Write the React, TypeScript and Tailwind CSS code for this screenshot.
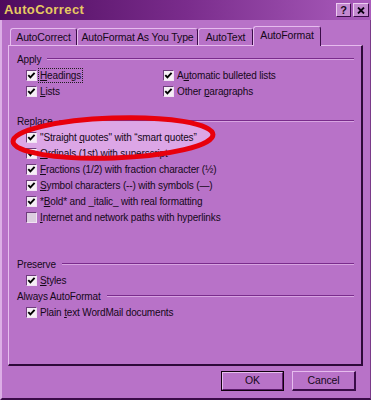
import React from "react";

const FONT = { fontFamily: '"Liberation Sans", Arial, sans-serif' };

function Box({ checked = true, grey = false }: { checked?: boolean; grey?: boolean }) {
  return (
    <span
      className={
        "inline-flex w-[11px] h-[11px] shrink-0 items-center justify-center border-t border-l border-r border-b border-t-[#6e3c7c] border-l-[#6e3c7c] border-r-[#f2e2f4] border-b-[#f2e2f4] " +
        (grey ? "bg-[#dccde0]" : "bg-[#f6eef6]")
      }
    >
      {checked && (
        <svg width="9" height="9" viewBox="0 0 9 9">
          <path d="M1.3 4.2 L3.4 6.4 L7.6 1.8" stroke="#000" strokeWidth="1.9" fill="none" />
        </svg>
      )}
    </span>
  );
}

function U({ children }: { children: React.ReactNode }) {
  return <span className="underline underline-offset-[1px]">{children}</span>;
}

function Row({
  children,
  checked = true,
  grey = false,
  focus = false,
}: {
  children: React.ReactNode;
  checked?: boolean;
  grey?: boolean;
  focus?: boolean;
}) {
  return (
    <div className="h-[16px] flex items-center gap-[2px]">
      <Box checked={checked} grey={grey} />
      <span
        className={
          "leading-[13px] whitespace-nowrap px-[1px] " +
          (focus ? "outline outline-1 outline-dotted outline-[#202020]" : "")
        }
      >
        {children}
      </span>
    </div>
  );
}

function Section({ label }: { label: React.ReactNode }) {
  return (
    <div className="h-[16px] flex items-center pl-[8px] pr-[7px]">
      <span className="whitespace-nowrap leading-[13px]">{label}</span>
      <div className="flex-1 ml-[6px] h-[2px] border-t border-b border-t-[#7a2c8c] border-b-[#d8a4e2]" />
    </div>
  );
}

function Tab({ label, w, selected = false }: { label: string; w: string; selected?: boolean }) {
  return (
    <div
      className={
        "flex items-center justify-center rounded-t-[3px] border-t border-l border-r border-t-[#e6bcee] border-l-[#e6bcee] border-r-[#3a0c48] whitespace-nowrap " +
        w +
        (selected ? " h-[20px] -mb-[1px] relative z-10 bg-[#b872c8] pb-[2px]" : " h-[17px] pt-[1px]")
      }
    >
      {label}
    </div>
  );
}

export default function App() {
  return (
    <div
      className="w-[371px] h-[400px] bg-[#b872c8] text-[10px] tracking-[-0.15px] text-[#150818] overflow-hidden flex flex-col"
      style={FONT}
    >
      {/* Title bar */}
      <div className="h-[20px] shrink-0 flex items-center justify-between pl-[4px] pr-[2px] bg-gradient-to-r from-[#4e0a5e] via-[#7a2c8c] to-[#aa5cbc]">
        <span className="text-[13px] font-bold text-[#e6c862] tracking-[0.4px]">AutoCorrect</span>
        <div className="flex gap-[2px]">
          <div className="w-[15px] h-[14px] flex items-center justify-center bg-[#c48ad0] border-t border-l border-r border-b border-t-[#ecccf0] border-l-[#ecccf0] border-r-[#3a0c48] border-b-[#3a0c48] text-[11px] font-bold leading-none text-[#1a0820]">
            ?
          </div>
          <div className="w-[16px] h-[14px] flex items-center justify-center bg-[#c48ad0] border-t border-l border-r border-b border-t-[#ecccf0] border-l-[#ecccf0] border-r-[#3a0c48] border-b-[#3a0c48]">
            <svg width="8" height="7" viewBox="0 0 8 7">
              <path d="M1 0.5 L7 6.5 M7 0.5 L1 6.5" stroke="#0a0010" strokeWidth="1.8" />
            </svg>
          </div>
        </div>
      </div>

      {/* Body */}
      <div className="flex-1 flex flex-col border-l-2 border-b-2 border-r border-l-[#dcaee6] border-b-[#3a0c48] border-r-[#7a3a8a]">
        {/* Tabs */}
        <div className="mt-[7px] ml-[8px] flex items-end h-[18px] text-[10.5px]">
          <Tab label="AutoCorrect" w="w-[67px]" />
          <Tab label="AutoFormat As You Type" w="w-[121px]" />
          <Tab label="AutoText" w="w-[55px]" />
          <Tab label="AutoFormat" w="w-[68px]" selected />
        </div>

        {/* Panel */}
        <div className="relative ml-[6px] w-[355px] h-[321px] border-t border-l border-r-2 border-b-2 border-t-[#e6bcee] border-l-[#e6bcee] border-r-[#2e0a3a] border-b-[#2e0a3a] pt-[5px]">
          <svg
            className="absolute left-0 top-0 pointer-events-none"
            width="355"
            height="321"
            viewBox="0 0 355 321"
          >
            <ellipse cx="104" cy="92" rx="100" ry="20" fill="#dca6e6" transform="rotate(-2 104 92)" />
          </svg>

          <div className="relative">
            <Section label="Apply" />
            <div className="grid grid-cols-[137px_1fr] pl-[17px]">
              <Row focus>
                <U>H</U>eadings
              </Row>
              <Row>
                A<U>u</U>tomatic bulleted lists
              </Row>
              <Row>
                <U>L</U>ists
              </Row>
              <Row>
                Other <U>p</U>aragraphs
              </Row>
            </div>

            <div className="h-[14px]" />
            <Section label="Replace" />
            <div className="pl-[17px]">
              <Row>
                "Straight <U>q</U>uotes" with “smart quotes”
              </Row>
              <Row>
                <U>O</U>rdinals (1st) with superscript
              </Row>
              <Row>
                <U>F</U>ractions (1/2) with fraction character (½)
              </Row>
              <Row>
                <U>S</U>ymbol characters (--) with symbols (—)
              </Row>
              <Row>
                *<U>B</U>old* and _italic_ with real formatting
              </Row>
              <Row checked={false} grey>
                <U>I</U>nternet and network paths with hyperlinks
              </Row>
            </div>

            <div className="h-[31px]" />
            <Section label="Preserve" />
            <div className="pl-[17px]">
              <Row>
                <U>S</U>tyles
              </Row>
            </div>
            <Section label="Always AutoFormat" />
            <div className="pl-[17px]">
              <Row>
                Plain <U>t</U>ext WordMail documents
              </Row>
            </div>
          </div>

          <svg
            className="absolute left-0 top-0 pointer-events-none"
            width="355"
            height="321"
            viewBox="0 0 355 321"
          >
            <ellipse
              cx="104"
              cy="92"
              rx="100"
              ry="20"
              fill="none"
              stroke="#e8000c"
              strokeWidth="5"
              transform="rotate(-2 104 92)"
            />
          </svg>
        </div>

        {/* Buttons */}
        <div className="mt-[5px] ml-[219px] flex gap-[8px] text-[10.5px]">
          <div className="w-[63px] h-[20px] border border-[#10000e] flex">
            <div className="flex-1 flex items-center justify-center border-t border-l border-r border-b border-t-[#e6bcee] border-l-[#e6bcee] border-r-[#5a1a6a] border-b-[#5a1a6a]">
              OK
            </div>
          </div>
          <div className="w-[64px] h-[20px] flex items-center justify-center border-t border-l border-r-2 border-b-2 border-t-[#e6bcee] border-l-[#e6bcee] border-r-[#3a0c48] border-b-[#3a0c48]">
            Cancel
          </div>
        </div>
      </div>
    </div>
  );
}
